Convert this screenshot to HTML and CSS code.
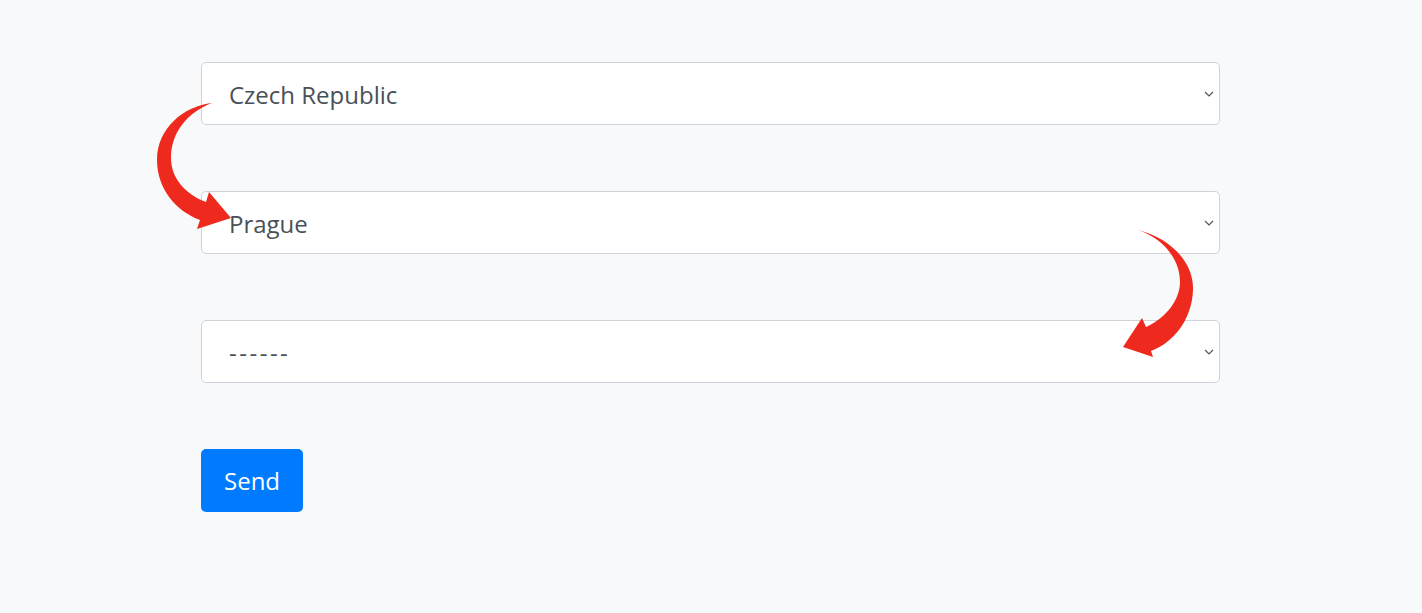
FILE: index.html
```html
<!DOCTYPE html>
<html lang="en">
<head>
    <meta charset="UTF-8">
    <title>Country form</title>
    <link rel="stylesheet" href="styles.css">
</head>
<body>
<div id="page">
    <form id="form">
        <div class="field">
            <select class="select">
                <option>Czech Republic</option>
            </select>
            <svg class="chevron" width="10" height="6" viewBox="0 0 10 6"><path d="M1 1 L5 5 L9 1" fill="none" stroke="#555" stroke-width="1.2"/></svg>
        </div>
        <div class="field">
            <select class="select">
                <option>Prague</option>
            </select>
            <svg class="chevron" width="10" height="6" viewBox="0 0 10 6"><path d="M1 1 L5 5 L9 1" fill="none" stroke="#555" stroke-width="1.2"/></svg>
        </div>
        <div class="field">
            <select class="select empty">
                <option>------</option>
            </select>
            <svg class="chevron" width="10" height="6" viewBox="0 0 10 6"><path d="M1 1 L5 5 L9 1" fill="none" stroke="#555" stroke-width="1.2"/></svg>
        </div>
        <div class="actions">
            <button type="button" class="btn">Send</button>
        </div>
    </form>
</div>

<!-- red hint arrows drawn over the form -->
<svg id="arrows" width="1422" height="613" viewBox="0 0 1422 613">
    <path d="M212,103 C184,106 157,128 157,160 C157,189 176,211 200,220 L197,229 L231,218 L209,192 L206,202 C185,194 171,178 171,158 C171,132 188,112 212,103 Z" fill="#ee2a1e"/>
    <path d="M1138,230 C1170,238 1194,262 1193,290 C1192,320 1173,343 1151,351 L1153,357 L1123,347 L1142,318 L1146,327 C1166,318 1180,300 1180,282 C1180,258 1162,238 1138,230 Z" fill="#ee2a1e"/>
</svg>
</body>
</html>
```

FILE: styles.css
```css
*{
    margin: 0;
    padding: 0;
    box-sizing: border-box;
}
body{
    position: relative;
    background: #f8f9fa;
    font-family: "Open Sans", "Noto Sans", sans-serif;
    color: #495057;
}
#page{
    padding: 62px 0 0 201px;
}
#form{
    width: 1019px;
    display: flex;
    flex-direction: column;
    gap: 66px;
}
.field{
    position: relative;
}
.select{
    display: block;
    width: 100%;
    height: 63px;
    padding: 2px 40px 0 27px;
    border: 1px solid #ced4da;
    border-radius: 5px;
    background: #ffffff;
    color: #495057;
    font-family: "Open Sans", "Noto Sans", sans-serif;
    font-size: 24px;
    -webkit-appearance: none;
    appearance: none;
}
.select.empty{
    letter-spacing: 2.5px;
}
.chevron{
    position: absolute;
    right: 6px;
    top: 29px;
}
.btn{
    height: 63px;
    padding: 0 23px;
    border: 0;
    border-radius: 5px;
    background: #007bff;
    color: #ffffff;
    font-family: "Open Sans", "Noto Sans", sans-serif;
    font-size: 24px;
    cursor: pointer;
}
#arrows{
    position: absolute;
    left: 0;
    top: 0;
    pointer-events: none;
}
```
